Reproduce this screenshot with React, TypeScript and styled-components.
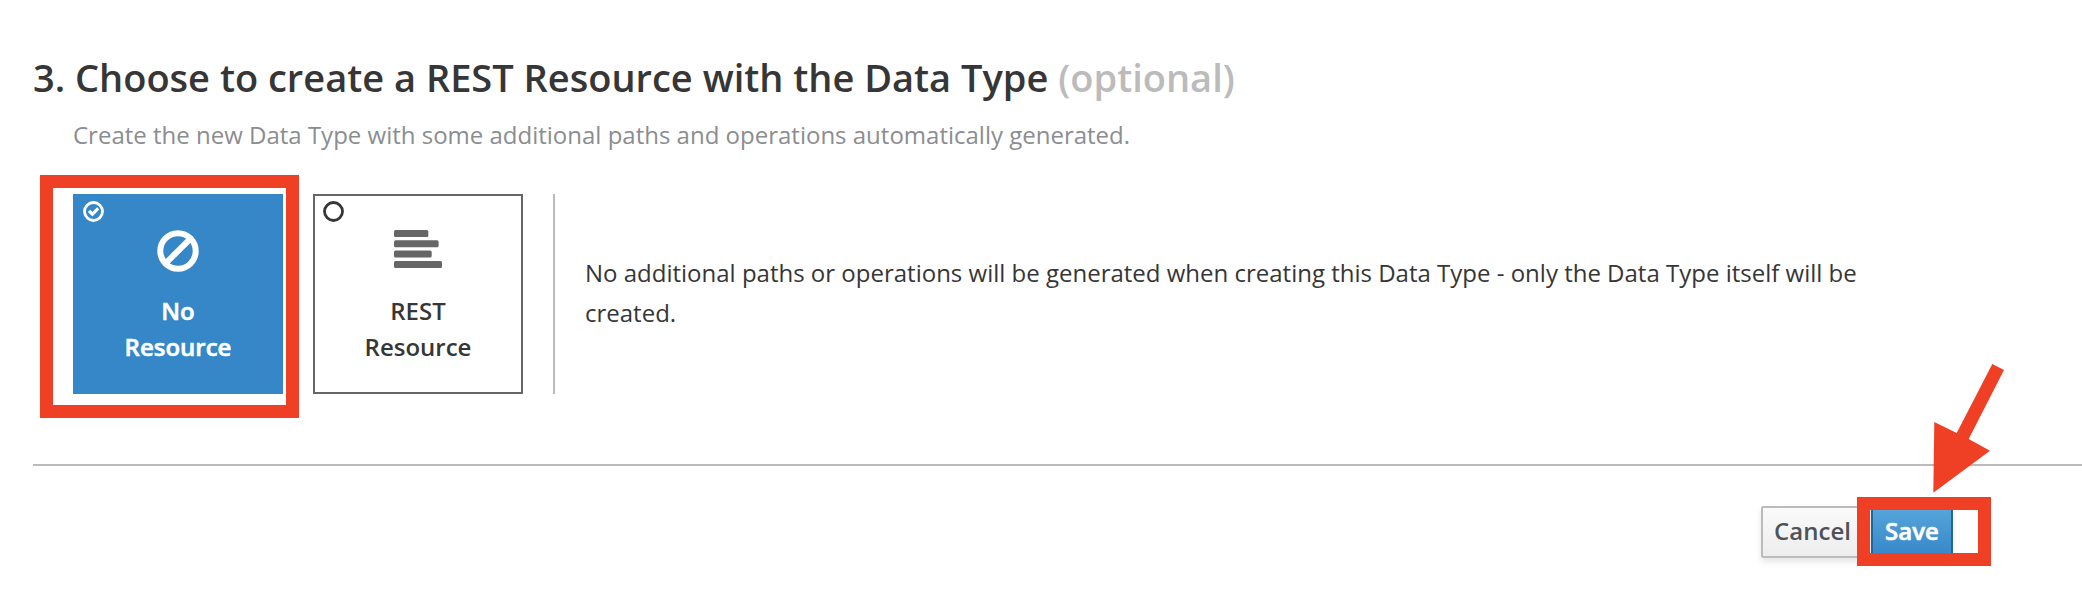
import React from 'react';
import styled, { createGlobalStyle } from 'styled-components';

const GlobalStyle = createGlobalStyle`
  * { box-sizing: border-box; }
  body { margin: 0; background: #fff; font-family: "Open Sans", sans-serif; color: #363636; }
`;

const Page = styled.main`
  position: relative;
  height: 612px;
  overflow: hidden;
  padding-left: 33px;
  display: flex;
  flex-direction: column;
`;
const Title = styled.h2`
  margin: 49px 0 0;
  font-size: 38px;
  line-height: 56px;
  font-weight: 600;
  white-space: nowrap;
`;
const Optional = styled.span`
  color: #bbb;
`;
const Subtitle = styled.p`
  margin: 10px 0 0 40px;
  font-size: 24px;
  line-height: 40px;
  color: #8b8d8f;
  white-space: nowrap;
`;
const Choices = styled.div`
  display: flex;
  gap: 30px;
  height: 200px;
  margin: 39px 0 0 40px;
`;
const Card = styled.button<{ $selected?: boolean }>`
  position: relative;
  width: 210px;
  height: 200px;
  padding: 34px 0 0;
  border: 2px solid ${p => (p.$selected ? '#3587c8' : '#666')};
  background: ${p => (p.$selected ? '#3587c8' : '#fff')};
  color: ${p => (p.$selected ? '#fff' : '#363636')};
  font: 600 24px/36px "Open Sans", sans-serif;
  -webkit-text-stroke: ${p => (p.$selected ? '0.6px #fff' : '0')};
  display: flex;
  flex-direction: column;
  align-items: center;
`;
const Radio = styled.svg`
  position: absolute;
  left: 8px;
  top: 5px;
  width: 21px;
  height: 21px;
`;
const CardIcon = styled.svg`
  width: 48px;
  height: 42px;
  margin-bottom: 21px;
`;
const Details = styled.div`
  display: flex;
  align-items: center;
  width: 1320px;
  border-left: 2px solid #bbb;
  padding: 0 0 2px 30px;
  font-size: 24px;
  line-height: 40px;
`;
const Footer = styled.footer`
  display: flex;
  margin-top: 70px;
  padding: 40px 0 0 1728px;
  border-top: 2px solid #bbb;
  gap: 8px;
`;
const Button = styled.button<{ $primary?: boolean }>`
  width: ${p => (p.$primary ? 82 : 102)}px;
  height: 52px;
  padding: 0 0 2px ${p => (p.$primary ? 0 : 1)}px;
  border: 2px solid ${p => (p.$primary ? '#21669b' : '#bbb')};
  border-radius: 2px;
  background: ${p => (p.$primary ? 'linear-gradient(#57a5db, #3587c8)' : 'linear-gradient(#fafafa, #ededed)')};
  box-shadow: 0 4px 6px rgba(3, 3, 3, 0.1);
  color: ${p => (p.$primary ? '#fff' : '#4d5258')};
  font: 600 24px/40px "Open Sans", sans-serif;
  -webkit-text-stroke: ${p => (p.$primary ? '0.6px #fff' : '0')};
  white-space: nowrap;
`;
const Highlight = styled.div<{ $x: number; $y: number; $w: number; $h: number }>`
  position: absolute;
  left: ${p => p.$x}px;
  top: ${p => p.$y}px;
  width: ${p => p.$w}px;
  height: ${p => p.$h}px;
  border: 13px solid #ef4025;
`;
const Arrow = styled.svg`
  position: absolute;
  left: 1933px;
  top: 364px;
  width: 72px;
  height: 130px;
`;

export default function App() {
  return (
    <Page>
      <GlobalStyle />
      <Title>
        3. Choose to create a REST Resource with the Data Type <Optional>(optional)</Optional>
      </Title>
      <Subtitle>Create the new Data Type with some additional paths and operations automatically generated.</Subtitle>
      <Choices>
        <Card $selected>
          <Radio viewBox="0 0 21 21" fill="none" stroke="#fff">
            <circle cx="10.5" cy="10.5" r="9" strokeWidth="2.8" />
            <path d="M6 9.8 9.4 13.2 15.2 7.4" strokeWidth="3.1" />
          </Radio>
          <CardIcon viewBox="0 0 48 42" fill="none" stroke="#fff" strokeWidth="6">
            <circle cx="24" cy="21" r="17.7" />
            <path d="M11.8 33.2 36.2 8.8" />
          </CardIcon>
          <span>No</span>
          <span>Resource</span>
        </Card>
        <Card>
          <Radio viewBox="0 0 21 21" fill="none" stroke="#363636">
            <circle cx="10.5" cy="10.5" r="9" strokeWidth="2.8" />
          </Radio>
          <CardIcon viewBox="0 0 48 42" fill="#666">
            <rect y="0" width="34.3" height="7" rx="1.5" />
            <rect y="10.3" width="44.6" height="7" rx="1.5" />
            <rect y="20.6" width="37.7" height="7" rx="1.5" />
            <rect y="30.9" width="48" height="7" rx="1.5" />
          </CardIcon>
          <span>REST</span>
          <span>Resource</span>
        </Card>
        <Details>
          No additional paths or operations will be generated when creating this Data Type - only the Data Type itself will be created.
        </Details>
      </Choices>
      <Footer>
        <Button>Cancel</Button>
        <Button $primary>Save</Button>
      </Footer>
      <Highlight $x={40} $y={175} $w={259} $h={243} />
      <Highlight $x={1857} $y={497} $w={134} $h={69} />
      <Arrow viewBox="0 0 72 130" fill="#ef4025">
        <path d="M59.3 0 71 6 35.7 75 57 86.7.3 128.7 1.3 58 23.7 69Z" />
      </Arrow>
    </Page>
  );
}
